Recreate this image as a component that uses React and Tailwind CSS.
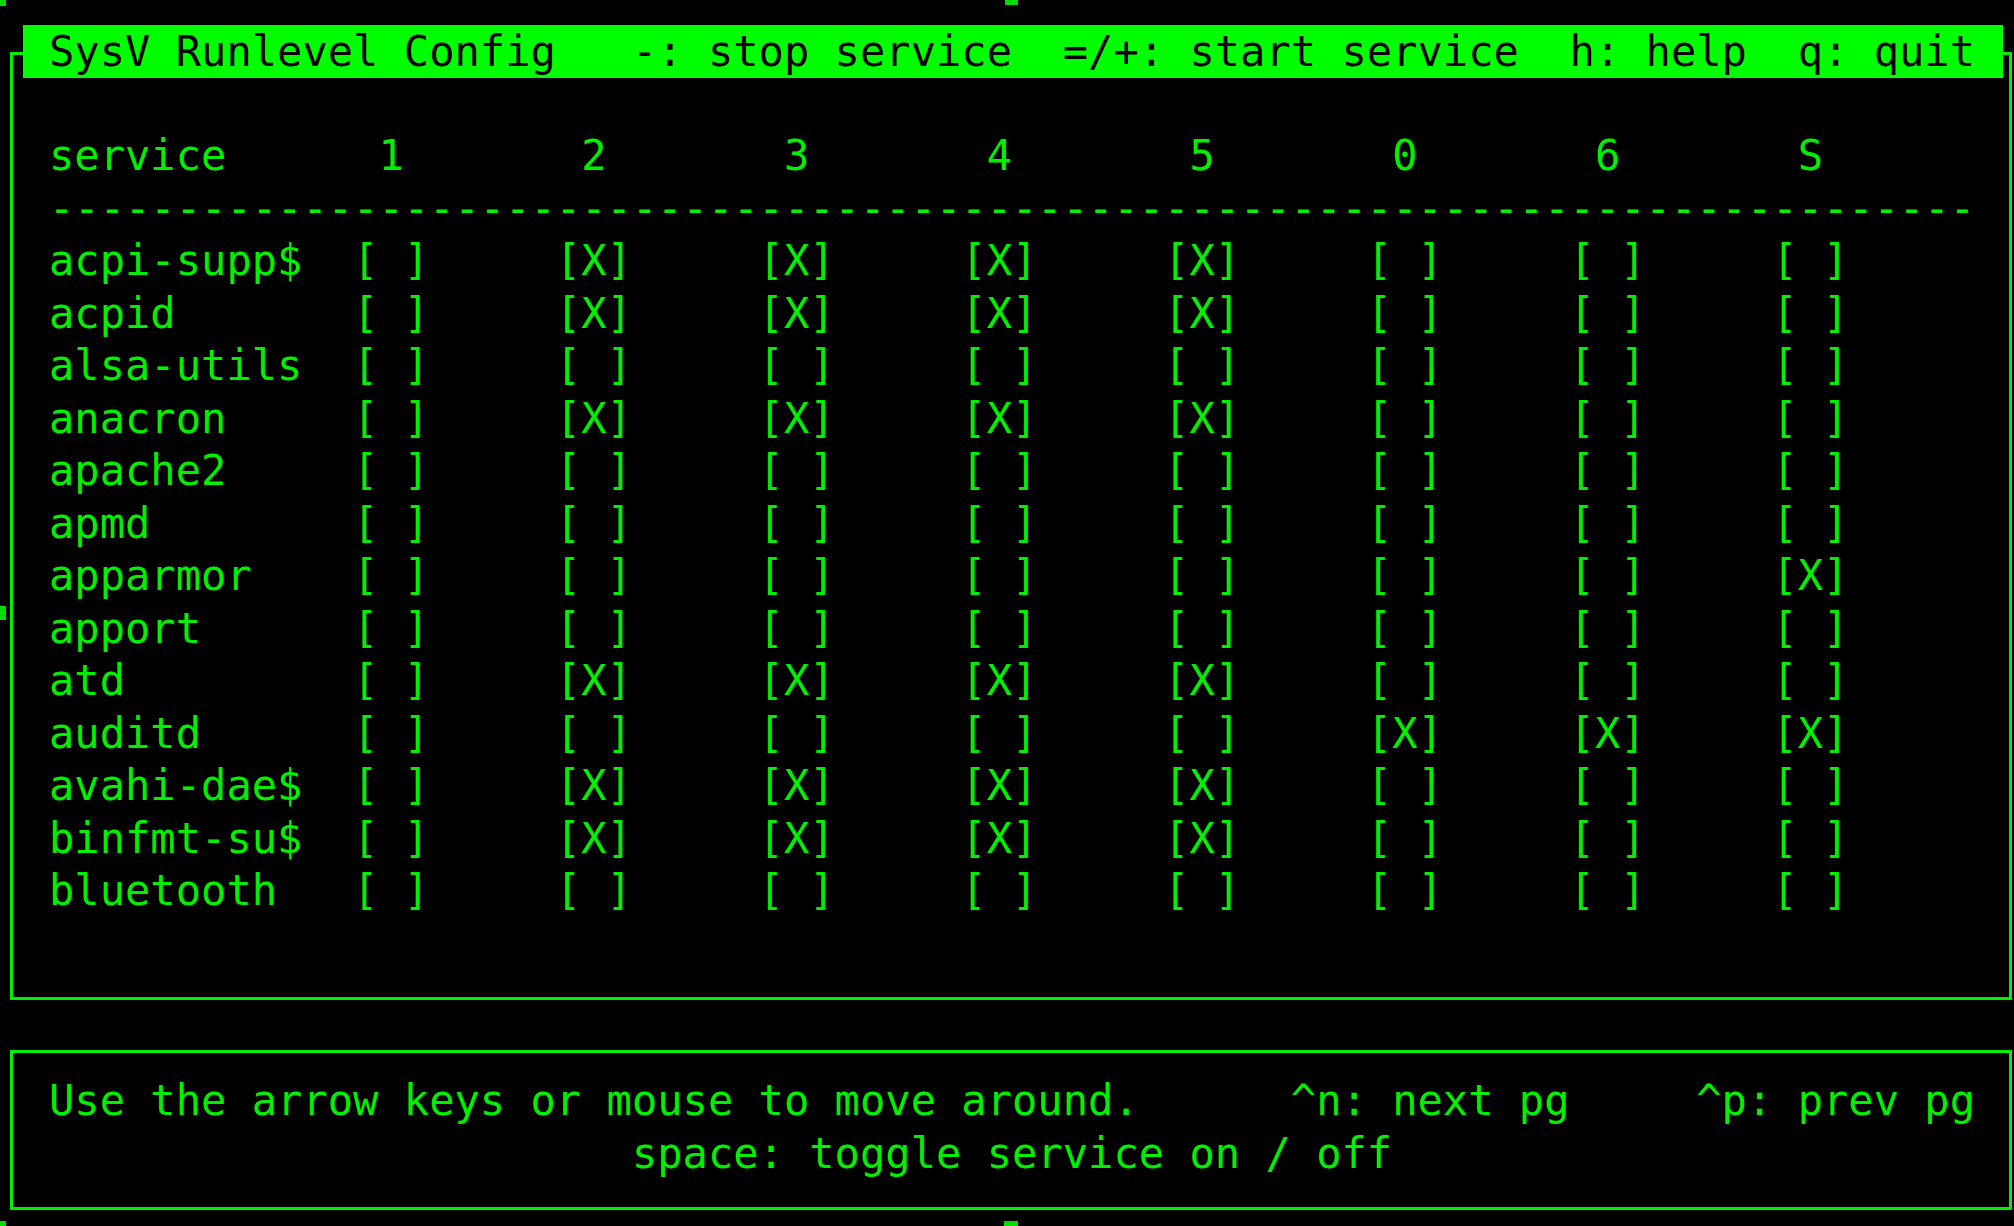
import React from 'react';

const LEVELS = ['1', '2', '3', '4', '5', '0', '6', 'S'];

// on/off for levels 1 2 3 4 5 0 6 S
const SERVICES = [
  ['acpi-supp$', [0, 1, 1, 1, 1, 0, 0, 0]],
  ['acpid', [0, 1, 1, 1, 1, 0, 0, 0]],
  ['alsa-utils', [0, 0, 0, 0, 0, 0, 0, 0]],
  ['anacron', [0, 1, 1, 1, 1, 0, 0, 0]],
  ['apache2', [0, 0, 0, 0, 0, 0, 0, 0]],
  ['apmd', [0, 0, 0, 0, 0, 0, 0, 0]],
  ['apparmor', [0, 0, 0, 0, 0, 0, 0, 1]],
  ['apport', [0, 0, 0, 0, 0, 0, 0, 0]],
  ['atd', [0, 1, 1, 1, 1, 0, 0, 0]],
  ['auditd', [0, 0, 0, 0, 0, 1, 1, 1]],
  ['avahi-dae$', [0, 1, 1, 1, 1, 0, 0, 0]],
  ['binfmt-su$', [0, 1, 1, 1, 1, 0, 0, 0]],
  ['bluetooth', [0, 0, 0, 0, 0, 0, 0, 0]],
];

const header = 'service'.padEnd(13) + LEVELS.map((l) => l.padEnd(8)).join('');
const dashes = '-'.repeat(76);

function Line({ children, className = '' }) {
  return (
    <div className={`h-[52.5px] leading-[52.5px] whitespace-pre ${className}`}>{children}</div>
  );
}

export default function App() {
  const footer1 =
    'Use the arrow keys or mouse to move around.'.padEnd(49) +
    '^n: next pg'.padEnd(16) +
    '^p: prev pg';
  const footer2 = ' '.repeat(23) + 'space: toggle service on / off';

  return (
    <div
      className="relative w-[2014px] h-[1226px] overflow-hidden bg-black flex flex-col text-[42.1px] text-[#00f000]"
      style={{ fontFamily: '"DejaVu Sans Mono", "Liberation Mono", monospace' }}
    >
      {/* edge marks of the terminal window */}
      <div className="absolute left-0 top-0 w-[6px] h-[6px] bg-[#00dd00]" />
      <div className="absolute left-[1005px] top-0 w-[13px] h-[5px] bg-[#00dd00]" />
      <div className="absolute left-0 top-[606px] w-[6px] h-[14px] bg-[#00dd00]" />
      <div className="absolute left-0 top-[1221px] w-[6px] h-[5px] bg-[#00dd00]" />
      <div className="absolute left-[1004px] top-[1221px] w-[14px] h-[5px] bg-[#00dd00]" />

      {/* main window */}
      <div className="relative ml-[10px] mt-[52px] w-[2002px] h-[948px] shrink-0 border-[3px] border-[#00f000] pl-[36px] pt-[75px]">
        <div className="absolute left-[10px] top-[-30px] w-[1980px] h-[53px] bg-[#00ff00] text-black pl-[26px] leading-[53px] whitespace-pre">
          {'SysV Runlevel Config   -: stop service  =/+: start service  h: help  q: quit'}
        </div>

        <Line>{header}</Line>
        <Line>{dashes}</Line>
        {SERVICES.map(([name, on]) => (
          <Line key={name}>
            {name.padEnd(12) + on.map((v) => (v ? '[X]' : '[ ]').padEnd(8)).join('')}
          </Line>
        ))}
      </div>

      {/* help window */}
      <div className="ml-[10px] mt-[50px] w-[2002px] h-[160px] shrink-0 border-[3px] border-[#00f000] pl-[36px] pt-[22px]">
        <Line>{footer1}</Line>
        <Line>{footer2}</Line>
      </div>
    </div>
  );
}
